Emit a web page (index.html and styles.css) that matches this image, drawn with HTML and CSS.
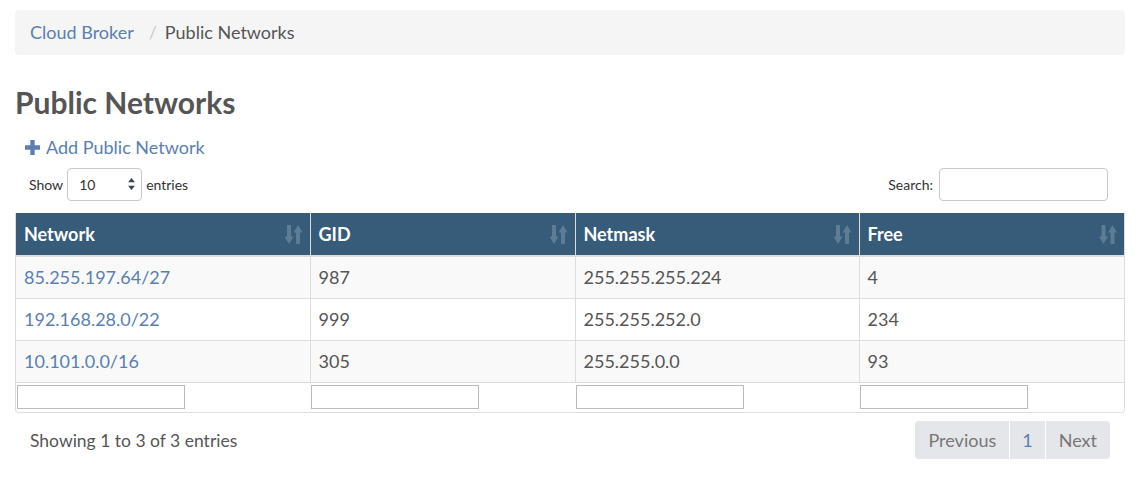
FILE: index.html
```html
<!DOCTYPE html>
<html>
<head>
<meta charset="utf-8">
<link rel="stylesheet" href="styles.css">
</head>
<body>
<div class="page">
  <ol class="breadcrumb">
    <li><a href="#">Cloud Broker</a></li>
    <li class="sep">/</li>
    <li class="active">Public Networks</li>
  </ol>
  <h1 class="title">Public Networks</h1>
  <a class="add-link" href="#"><svg class="plus" viewBox="0 0 14 14" width="15" height="15"><path d="M5 0h4v5h5v4H9v5H5V9H0V5h5z" fill="currentColor"/></svg>Add Public Network</a>
  <div class="controls">
    <label class="length">Show <span class="select"><span class="sel-val">10</span><svg class="sel-arrows" viewBox="0 0 8 14" width="7" height="12"><path d="M4 0L8 5H0z M4 14L0 9H8z" fill="#345"/></svg></span> entries</label>
    <label class="search">Search: <input type="text" class="search-input"></label>
  </div>
  <div class="table-wrap">
    <table class="grid">
      <thead>
        <tr>
          <th class="c1">Network<span class="sort"></span></th>
          <th class="c2">GID<span class="sort"></span></th>
          <th class="c3">Netmask<span class="sort"></span></th>
          <th class="c4">Free<span class="sort"></span></th>
        </tr>
      </thead>
      <tbody>
        <tr class="odd"><td><a href="#">85.255.197.64/27</a></td><td>987</td><td>255.255.255.224</td><td>4</td></tr>
        <tr><td><a href="#">192.168.28.0/22</a></td><td>999</td><td>255.255.252.0</td><td>234</td></tr>
        <tr class="odd"><td><a href="#">10.101.0.0/16</a></td><td>305</td><td>255.255.0.0</td><td>93</td></tr>
      </tbody>
      <tfoot>
        <tr><td><input type="text" class="filter"></td><td><input type="text" class="filter"></td><td><input type="text" class="filter"></td><td><input type="text" class="filter"></td></tr>
      </tfoot>
    </table>
  </div>
  <div class="footer">
    <div class="info">Showing 1 to 3 of 3 entries</div>
    <div class="pager">
      <span class="pg disabled">Previous</span>
      <span class="pg current">1</span>
      <span class="pg disabled">Next</span>
    </div>
  </div>
</div>
</body>
</html>
```

FILE: styles.css
```css
* { box-sizing: border-box; }
html, body { margin: 0; padding: 0; background: #fff; }
body { font-family: Lato, "Open Sans", "Liberation Sans", sans-serif; color: #555; }
a { color: #5a7fb0; text-decoration: none; }
.page { padding: 10px 20px 0 15px; }
.breadcrumb {
  list-style: none; margin: 0; padding: 0 15px; height: 45px;
  display: flex; align-items: center; gap: 0;
  background: #f5f5f5; border-radius: 4px; font-size: 18px; padding-bottom: 2px;
}
.breadcrumb .sep { color: #ccc; padding: 0 8px 0 15px; }
.breadcrumb .active { color: #555; }
.title { margin: 29px 0 0 0; font-size: 30px; font-weight: 700; line-height: 36px; color: #555; }
.add-link { display: flex; align-items: center; gap: 6px; margin: 16px 0 0 10px; font-size: 18px; line-height: 22px; width: max-content; }
.plus { color: #5a7fb0; }
.controls { display: flex; justify-content: space-between; align-items: center; margin-top: 9px; font-size: 14px; color: #333; height: 34px; padding: 0 17px 0 14px; }
.length { display: flex; align-items: center; gap: 4px; }
.select { display: inline-flex; align-items: center; justify-content: space-between; width: 75px; height: 33px; border: 1px solid #c8c8c8; border-radius: 4px; padding: 0 6px 0 11px; font-size: 14px; color: #333; }
.search { display: flex; align-items: center; gap: 6px; }
.search-input { width: 169px; height: 33px; border: 1px solid #c8c8c8; border-radius: 4px; margin: 0; }
.table-wrap { margin-top: 12px; border: 1px solid #ddd; border-top: none; border-radius: 0 0 4px 4px; overflow: hidden; }
.grid { width: 100%; border-collapse: collapse; font-size: 18px; }
.grid th {
  background: #365c7a; color: #fff; text-align: left; font-weight: 700; font-size: 18px;
  height: 43px; padding: 0 8px; position: relative; border-left: 1px solid #ddd;
  border-bottom: 2px solid #ddd;
}
.grid th:first-child, .grid td:first-child { border-left: none; }
.grid th .sort { position: absolute; right: 7px; top: 12px; width: 18px; height: 19px; }
.grid th .sort::before, .grid th .sort::after { content: ""; position: absolute; top: 0; width: 9px; height: 19px; background: rgba(255,255,255,0.2); }
.grid th .sort::before { left: 0; clip-path: polygon(28% 0, 72% 0, 72% 60%, 100% 60%, 50% 100%, 0 60%, 28% 60%); }
.grid th .sort::after { right: 0; clip-path: polygon(50% 0, 100% 40%, 72% 40%, 72% 100%, 28% 100%, 28% 40%, 0 40%); }
.c1 { width: 294px; } .c2 { width: 265px; } .c3 { width: 284px; }
.grid td { height: 42px; padding: 0 8px; border-left: 1px solid #ddd; border-top: 1px solid #ddd; color: #555; }
.grid tbody tr:first-child td { border-top: none; }
.grid tbody tr.odd td { background: #f9f9f9; }
.grid tfoot td { height: 30px; padding: 0 0 0 1px; border-left: none; vertical-align: middle; }
.filter { width: 168px; height: 24px; border: 1px solid #bbb; margin: 0; display: block; }
.footer { display: flex; justify-content: space-between; align-items: center; margin-top: 8px; padding: 0 15px 0 15px; }
.info { font-size: 17.5px; color: #555; }
.pager { display: flex; height: 38px; border-radius: 4px; overflow: hidden; }
.pg { display: flex; align-items: center; background: #e4e6e9; font-size: 18px; color: #777; padding: 0 13px; border-left: 1px solid #fff; }
.pg:first-child { border-left: none; }
.pg.current { color: #5a7fb0; padding: 0 12px; }
```
